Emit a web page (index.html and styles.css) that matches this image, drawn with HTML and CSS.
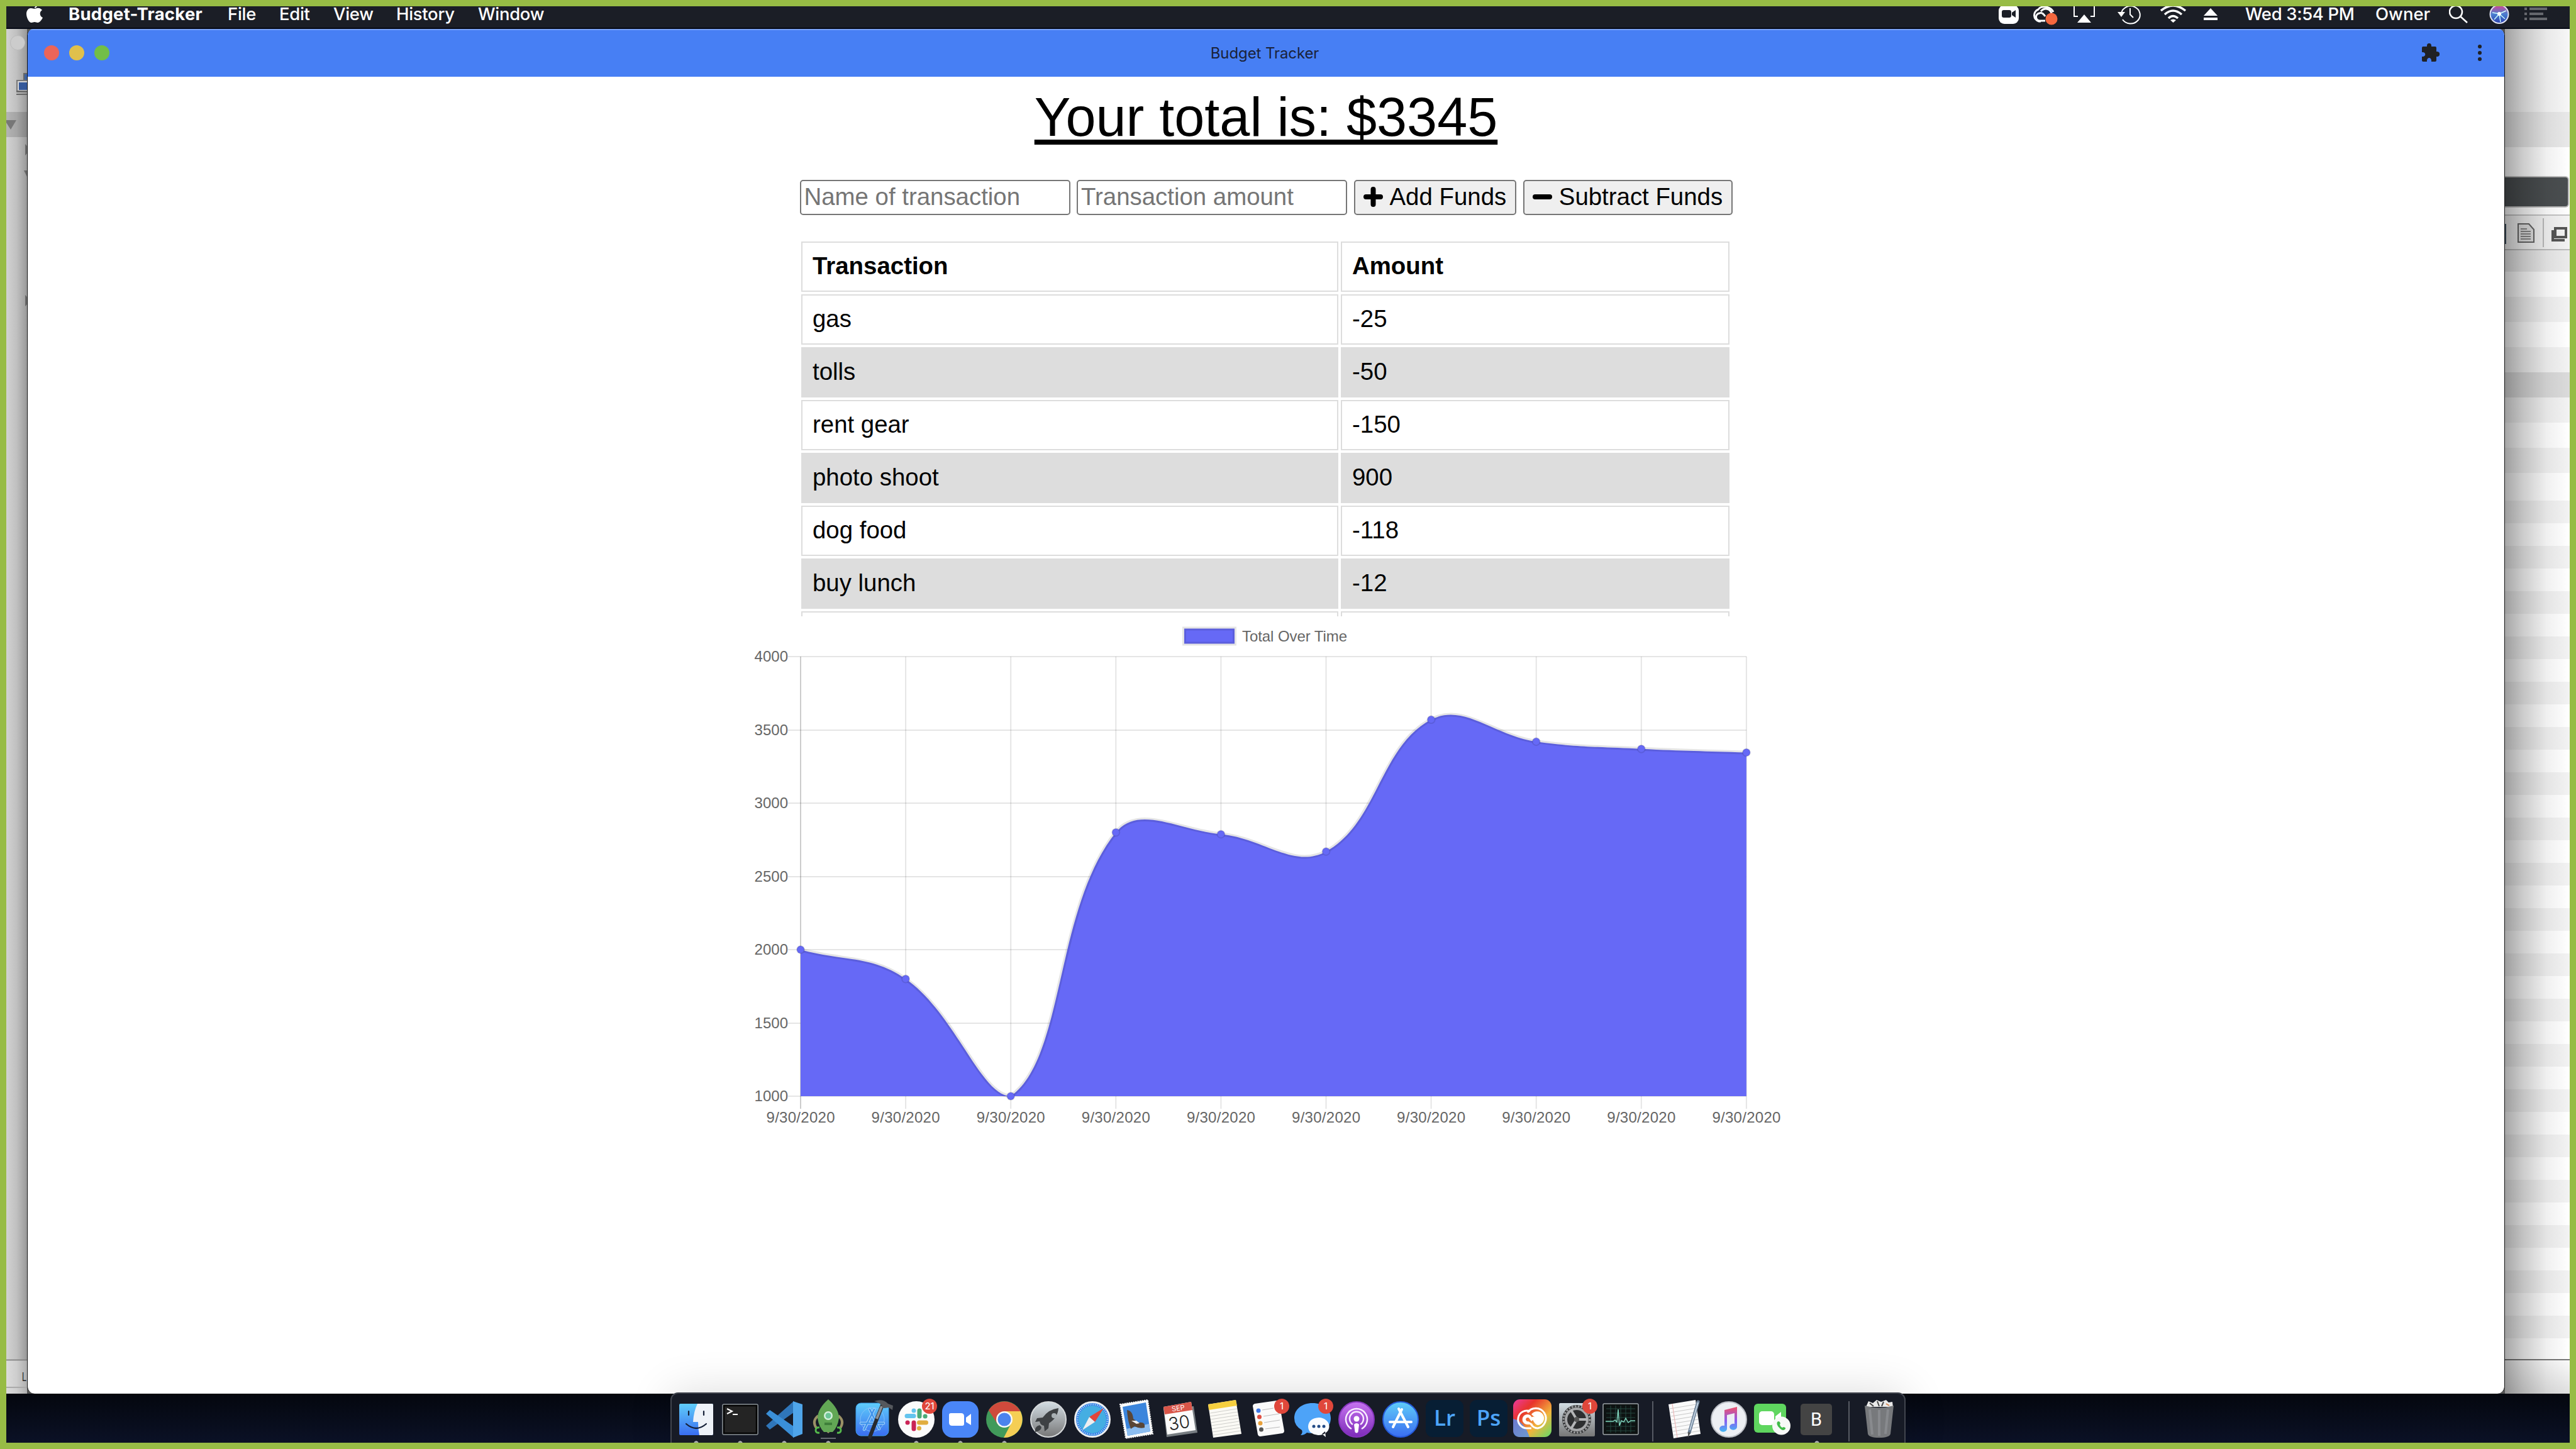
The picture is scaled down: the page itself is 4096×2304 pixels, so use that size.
FILE: index.html
```html
<!DOCTYPE html>
<html lang="en">
<head>
<meta charset="utf-8">
<title>Budget Tracker</title>
<link rel="stylesheet" href="styles.css">
</head>
<body>
<div class="screen">
  <header class="menubar">
    <nav class="menus">
      <svg class="apple" width="26" height="28" viewBox="0 0 26 28"><path fill="#fff" d="M13 2C14 0 16-1 17-1 17 1 15 3 13 3M13 4C15 4 16 2 20 3 22 3 24 5 25 6 20 9 21 16 26 18 24 22 21 26 18 26 16 26 15 25 13 25 11 25 10 26 8 26 4 26 0 18 0 12 0 7 3 3 7 3 10 3 11 4 13 4Z"/></svg>
      <span class="app-name">Budget-Tracker</span>
      <span>File</span><span>Edit</span><span>View</span><span>History</span><span>Window</span>
    </nav>
    <div class="status">
      <svg width="32" height="36"><rect x="0" y="-2" width="32" height="30" rx="9" fill="#fff"/><rect x="5" y="6" width="15" height="12" rx="3" fill="#1b1e26"/><path d="M21 10l6-4v12l-6-4z" fill="#1b1e26"/></svg>
      <svg width="44" height="36" fill="none" stroke="#fff" stroke-width="3"><path d="M15 24H12A10 10 0 0 1 11 5C15-1 30-1 35 9"/><path d="M22 23H14A6 6 0 0 1 13 11C17 9 20 13 22 16M15 8C22 0 32 5 32 13"/><circle cx="32" cy="20" r="9.5" fill="#f4673e" stroke="none"/></svg>
      <svg width="38" height="36" fill="none" stroke="#fff" stroke-width="2"><path d="M8 16H2V0M28 16h6V0"/><path d="M18 13l11 13H7z" fill="#fff" stroke="none"/></svg>
      <svg width="38" height="36" fill="none" stroke="#fff" stroke-width="2"><path d="M6 11A15 14 0 1 1 8 21M20 3v10l5 5"/><path d="M0 9h12l-6 8z" fill="#fff" stroke="none"/></svg>
      <svg width="42" height="36" fill="none" stroke="#fff" stroke-width="3.5"><path d="M1 7Q20-9 40 7M7 13Q20 1 34 13M13 19Q20 12 28 19"/><path d="M16 22q4.500-3 9 0l-4.500 4z" fill="#fff" stroke="none"/></svg>
      <svg width="24" height="36" fill="#fff"><path d="M11 3l11 12H0zM0 18h22v4H0z"/></svg>
      <span class="clock">Wed 3:54 PM</span>
      <span class="owner">Owner</span>
      <svg width="32" height="36" fill="none" stroke="#fff" stroke-width="2.500"><circle cx="11" cy="9" r="10"/><path d="M18 16l11 10"/></svg>
      <svg width="34" height="36"><defs><linearGradient id="siri" x2="0" y2="1"><stop offset="0" stop-color="#d6448f"/><stop offset=".5" stop-color="#4a7fd0"/><stop offset="1" stop-color="#2b3fae"/></linearGradient></defs><circle cx="16" cy="12.500" r="14.500" fill="url(#siri)" stroke="#dfe3f2" stroke-width="2"/><path d="M16 12L5 10M16 12l11-5M16 12l9 8M16 12l2 13M16 12L8 21" stroke="#c9fbff" stroke-width="1.500"/><circle cx="16" cy="12" r="3" fill="#fff"/></svg>
      <svg width="36" height="36" fill="#65676d"><path d="M0 2h4v4H0zM8 2h28v4H8zM0 10h4v4H0zM8 10h22v4H8zM0 18h4v4H0zM8 18h28v4H8z"/></svg>
    </div>
  </header>

  <div class="stage">
    <aside class="behind-left">
      <svg width="33" height="2170">
        <circle cx="18" cy="22" r="11.500" fill="#ccc" stroke="#bbb"/>
        <path d="M28 71h6v20h-6z" fill="#3d62a0" stroke="#666" stroke-width="2"/>
        <path d="M17 82h18v18H17z" fill="#d5d5d5" stroke="#777" stroke-width="2"/><path d="M20 85h14v12H20z" fill="#36599a"/><path d="M16 99h18M16 104h18" stroke="#666" stroke-width="2"/>
        <path d="M0 132h33v40H0z" fill="#000" opacity=".14"/>
        <path d="M0 145h16L7 160 0 149z" fill="#777"/>
        <path d="M30 183l9 9-9 9zM28 225h12l-6 12zM30 423l9 9-9 9z" fill="#686868"/>
        <path d="M0 2117h33v53H0z" fill="#fff" opacity=".22"/><path d="M0 2116.500h33" stroke="#777" stroke-width="1.500"/><path d="M0 2160h33" stroke="#aaa" stroke-width="2"/>
        <text class="peek" x="25" y="2150" textLength="7" lengthAdjust="spacingAndGlyphs">L</text>
      </svg>
    </aside>

    <main class="window">
      <div class="titlebar">
        <div class="lights"><i class="light red"></i><i class="light yellow"></i><i class="light green"></i></div>
        <div class="title">Budget Tracker</div>
        <div class="tools">
          <svg width="28" height="30" fill="#202124"><path d="M0 7Q0 5 2 5H8C7-2 16-2 15 5H21Q23 5 23 7V13C30 12 30 22 23 21V27Q23 29 21 29H15C16 21 7 21 8 29H2Q0 29 0 27V21C7 22 7 13 0 14Z"/></svg>
          <svg width="6" height="28" fill="#202124"><circle cx="3" cy="4" r="3"/><circle cx="3" cy="14" r="3"/><circle cx="3" cy="24" r="3"/></svg>
        </div>
      </div>
      <div class="page">
        <h1 class="total">Your total is: $3345</h1>
        <form class="entry">
          <input class="field" type="text" placeholder="Name of transaction">
          <input class="field" type="text" placeholder="Transaction amount">
          <button class="btn add" type="button"><svg width="31" height="32" viewBox="0 0 31 32"><path d="M15.500 4v24M4 16h23" stroke="#000" stroke-width="8" stroke-linecap="round"/></svg>Add Funds</button>
          <button class="btn sub" type="button"><svg width="31" height="32" viewBox="0 0 31 32"><path d="M4 16h23" stroke="#000" stroke-width="8" stroke-linecap="round"/></svg>Subtract Funds</button>
        </form>
        <div class="table-wrap">
          <table class="ledger">
            <thead><tr><th class="name">Transaction</th><th>Amount</th></tr></thead>
            <tbody>
              <tr><td>gas</td><td>-25</td></tr>
              <tr><td>tolls</td><td>-50</td></tr>
              <tr><td>rent gear</td><td>-150</td></tr>
              <tr><td>photo shoot</td><td>900</td></tr>
              <tr><td>dog food</td><td>-118</td></tr>
              <tr><td>buy lunch</td><td>-12</td></tr>
              <tr><td>&nbsp;</td><td>&nbsp;</td></tr>
            </tbody>
          </table>
        </div>
        <svg id="chart" class="chart" width="1680" height="830" viewBox="1173 980 1680 830"></svg>
      </div>
    </main>

    <aside class="behind-right">
      <div class="pane pane-top"></div>
      <div class="pane pane-tab"></div>
      <div class="pane pane-search"><div class="dark-field"></div></div>
      <div class="pane pane-icons">
        <svg width="103" height="52"><path d="M1 13v32" stroke="#456" stroke-width="2"/><path d="M21 13h17l8 9v20H21z" fill="#e4e4e4" stroke="#666" stroke-width="2"/><path d="M25 21h10M25 25h16M25 29h16M25 33h16M25 37h16" stroke="#888" stroke-width="2"/><path d="M61 4v46" stroke="#bbb" stroke-width="2"/><path d="M80 20h17v14H80zM76 23v16h19" fill="none" stroke="#555" stroke-width="4"/></svg>
      </div>
      <div class="pane pane-head"></div>
      <div class="pane pane-rows"></div>
      <div class="pane pane-rows-small"></div>
      <div class="pane pane-foot"></div>
    </aside>
  </div>

  <footer class="desk">
    <div class="dock">
      <svg class="ico run" viewBox="0 0 70 76"><defs><linearGradient id="b1" x2="0" y2="1"><stop offset="0" stop-color="#5fcdfa"/><stop offset="1" stop-color="#3a6df0"/></linearGradient><linearGradient id="gy" x2="0" y2="1"><stop offset="0" stop-color="#d3dde4"/><stop offset="1" stop-color="#777"/></linearGradient><linearGradient id="pu" x2="0" y2="1"><stop offset="0" stop-color="#c673f0"/><stop offset="1" stop-color="#7c2bb8"/></linearGradient><linearGradient id="cc" x2="1" y2="1"><stop offset="0" stop-color="#ec3aa0"/><stop offset=".3" stop-color="#e8342c"/><stop offset=".65" stop-color="#f2b53d"/><stop offset="1" stop-color="#5fdc6a"/></linearGradient><linearGradient id="mu" x2="0" y2="1"><stop offset="0" stop-color="#f0516b"/><stop offset=".55" stop-color="#8a5cf0"/><stop offset="1" stop-color="#42b8f5"/></linearGradient></defs><rect x="8" y="14" width="54" height="50" rx="2" fill="url(#b1)"/><path d="M37 14H60Q62 14 62 16V62Q62 64 60 64H40Q38 54 38 43H30Q31 26 37 14Z" fill="#eef2f8"/><path d="M23 26v6M47 26v6M19 46Q35 60 51 46" fill="none" stroke="#152038" stroke-width="2.200" stroke-linecap="round"/></svg>
      <svg class="ico run" viewBox="0 0 70 76"><rect x="7" y="15" width="56" height="48" rx="2" fill="#242424" stroke="#9aa3a8" stroke-width="1.500"/><rect x="9" y="17" width="52" height="44" fill="none" stroke="#050505" stroke-width="2.500"/><path d="M14 22l8 4-8 4M23 31h8" fill="none" stroke="#fff" stroke-width="2"/></svg>
      <svg class="ico run" viewBox="0 0 70 76"><path d="M6 49L50 10V28L12 55Z" fill="#2f76ba"/><path d="M12 24L50 50V68L6 30Z" fill="#3a8fd8"/><path d="M49 10L64 15V62L49 68Z" fill="#4fa5ea"/></svg>
      <svg class="ico run" viewBox="0 0 70 76"><path d="M19 33Q8 42 17 54M51 33Q62 42 53 54" fill="none" stroke="#9a9166" stroke-width="4"/><path d="M29 56h12l-6 5z" fill="#9a9166"/><path d="M35 7Q52 22 52 37 50 51 42 59H28Q20 51 18 37 18 22 35 7Z" fill="#62a755"/><circle cx="35" cy="33" r="7" fill="#d5f0dc"/><circle cx="35" cy="33" r="4.500" fill="#6cc597"/><path d="M29 44h12v4H29z" fill="#3f7f3a"/><path d="M21 52q-6-1-6 4t6 4M49 52q6-1 6 4t-6 4" fill="none" stroke="#55b94c" stroke-width="3"/><path d="M23 69h24" stroke="#666a72" stroke-width="2"/></svg>
      <svg class="ico" viewBox="0 0 70 76"><rect x="9" y="13" width="52" height="52" rx="8" fill="url(#b1)" stroke="#3b9ce8"/><circle cx="35" cy="39" r="19" fill="none" stroke="#8bc7f7" stroke-width=".8"/><path d="M22 55L38 23M46 54L31 23M17 45H53" stroke="#a9d6fa" stroke-width="4.500" stroke-linecap="round"/><path d="M22 55L38 23M46 54L31 23M17 45H53" stroke="#3f93ec" stroke-width="2.500" stroke-linecap="round"/><path d="M51 16L31 67" stroke="#27292d" stroke-width="6" stroke-linecap="round"/><path d="M50 18L42 38" stroke="#8d9196" stroke-width="4"/><path d="M38 10Q52 5 60 14L68 17 67 24 61 20Q56 21 53 21 48 12 38 10Z" fill="#55585d"/></svg>
      <svg class="ico run" viewBox="0 0 70 76"><circle cx="35" cy="39" r="29" fill="#fbfbfb"/><g stroke-width="7" stroke-linecap="round" fill="none"><path d="M31 25v.1M20 33.500h11" stroke="#63c4ee"/><path d="M40 25v9M49 34h.1" stroke="#4bab78"/><path d="M39.500 44h11M39.500 53v.1" stroke="#e1ad3f"/><path d="M31 44v10M21 44h.1" stroke="#ca2456"/></g><circle cx="56" cy="18" r="12" fill="#e0473b"/><text class="badge" x="56" y="23">21</text></svg>
      <svg class="ico run" viewBox="0 0 70 76"><rect x="6" y="10" width="58" height="58" rx="17" fill="#4a86f7"/><path d="M17 32Q17 29 20 29H36Q41 29 41 34V46Q41 49 38 49H22Q17 49 17 44ZM44 36L52 30V48L44 43Z" fill="#fff"/></svg>
      <svg class="ico run" viewBox="0 0 70 76"><circle cx="35" cy="39" r="29" fill="#419a5a"/><path d="M10 24.500A29 29 0 0 1 60.500 26H35L24 46Z" fill="#cf4a3c"/><path d="M60.500 26A29 29 0 0 1 34 68L46 45 35 26Z" fill="#f5ce55"/><circle cx="35" cy="39" r="13" fill="#f8f8f8"/><circle cx="35" cy="39" r="10.500" fill="#4b83ee"/></svg>
      <svg class="ico" viewBox="0 0 70 76"><circle cx="35" cy="39" r="28" fill="url(#gy)" stroke="#d6d9db" stroke-width="2"/><path d="M51 21Q35 23 26 36L17 37 14 43 21 42Q22 48 28 49L29 58 35 53 36 45Q50 36 51 21Z" fill="#3e4144"/><circle cx="44" cy="33" r="4" fill="#a9b0b4"/><path d="M21 48Q12 51 14 59 24 57 24 51Z" fill="#3e4144"/></svg>
      <svg class="ico" viewBox="0 0 70 76"><circle cx="35" cy="39" r="27.500" fill="#2e7fe6" stroke="#eceef0" stroke-width="3"/><circle cx="35" cy="39" r="22" fill="#45aee2"/><circle cx="35" cy="39" r="24" fill="none" stroke="#cfe6fb" stroke-width="3" stroke-dasharray="1 2"/><path d="M53 21L30 35 39 43Z" fill="#e2453b"/><path d="M19 56L30 35 39 43Z" fill="#eceef0"/></svg>
      <svg class="ico" viewBox="0 0 70 76"><path d="M9 15L53 8 61 62 18 69Z" fill="#fafafa" stroke="#fafafa" stroke-width="2" stroke-dasharray="2 1.500"/><path d="M13 19L50 12 57 58 21 65Z" fill="#3b85dc"/><path d="M19 54L55 46 57 58 21 65Z" fill="#8cbdf0"/><path d="M20 24Q29 25 30 38L38 44Q50 42 48 52 40 54 32 50L26 54 24 48Q21 39 20 24Z" fill="#5a4636"/><path d="M27 41l8 5 5-1-5-4z" fill="#eee"/></svg>
      <svg class="ico" viewBox="0 0 70 76"><path d="M8 21L13 67 62 60 56 18Z" fill="#777d82"/><path d="M8 19L52 11 59 56 14 63Z" fill="#fbfbfb"/><path d="M8 19L52 11 54 24 10 31Z" fill="#d95549"/><text class="cal-month" transform="rotate(-9 32 25)" x="32" y="25">SEP</text><text class="cal-day" transform="rotate(-9 34 52)" x="34" y="54">30</text></svg>
      <svg class="ico" viewBox="0 0 70 76"><path d="M9 15L53 8 62 62 17 68Z" fill="#fbfaf5"/><path d="M9 15L53 8 55 17 10 24Z" fill="#f6cf3f"/><path d="M12 29l43-7M12 34l44-7M13 39l44-7M14 44l44-7M14 49l44-7M15 54l44-7M16 59l44-7M17 64l44-7" stroke="#cfcfcb"/></svg>
      <svg class="ico" viewBox="0 0 70 76"><path d="M13 14L48 9Q51 9 52 12L60 57Q60 60 57 61L22 66Q19 66 18 63L10 18Q10 15 13 14Z" fill="#fafafa"/><circle cx="19" cy="25" r="3.500" fill="#3f78e6"/><circle cx="20.500" cy="35" r="3.500" fill="#e04f42"/><circle cx="22" cy="45" r="3.500" fill="#e9a13b"/><circle cx="23.500" cy="55" r="3.500" fill="#555"/><path d="M25 24l18-3M27 34l25-4M28 44l25-4M30 54l23-3" stroke="#bbb"/><circle cx="56" cy="18" r="12" fill="#e0473b"/><text class="badge" x="56" y="23">1</text></svg>
      <svg class="ico" viewBox="0 0 70 76"><path d="M35 13C52 13 64 23 64 37S52 61 35 61Q30 61 26 60 22 64 16 64 20 60 18 56 6 49 6 37C6 23 18 13 35 13Z" fill="#4da3f8"/><path d="M45 36A17 14 0 1 1 44 64Q28 62 28 50 29 37 45 36M50 62l6 5-1-9z" fill="#fafcff"/><circle cx="37" cy="50" r="2.500" fill="#234b86"/><circle cx="45" cy="50" r="2.500" fill="#234b86"/><circle cx="53" cy="50" r="2.500" fill="#234b86"/><circle cx="56" cy="18" r="12" fill="#e0473b"/><text class="badge" x="56" y="23">1</text></svg>
      <svg class="ico" viewBox="0 0 70 76"><circle cx="35" cy="39" r="28" fill="url(#pu)" stroke="#8534bd" stroke-width="2"/><g fill="none" stroke="#f8ecff" stroke-width="2.500"><path d="M27 54A17 17 0 1 1 43 54"/><path d="M29 47A11 11 0 1 1 41 47"/></g><circle cx="35" cy="38" r="4.500" fill="#fff"/><path d="M31 47q4-4 8 0l-1.500 12q-2.500 3-5 0z" fill="#fff"/></svg>
      <svg class="ico" viewBox="0 0 70 76"><circle cx="35" cy="39" r="28" fill="url(#b1)" stroke="#2559d8" stroke-width="2"/><path d="M23 51L37 23M47 51L32 22M18 43H52" stroke="#fff" stroke-width="4" stroke-linecap="round"/></svg>
      <svg class="ico" viewBox="0 0 70 76"><rect x="5" y="8" width="60" height="59" rx="11" fill="#071e34"/><text class="adobe" x="35" y="49">Lr</text></svg>
      <svg class="ico" viewBox="0 0 70 76"><rect x="5" y="8" width="60" height="59" rx="11" fill="#071e34"/><text class="adobe" x="35" y="49">Ps</text></svg>
      <svg class="ico" viewBox="0 0 70 76"><rect x="4" y="7" width="61" height="60" rx="11" fill="url(#cc)"/><path d="M4 38Q22 42 30 67H15Q4 67 4 56Z" fill="#4c8df6" opacity=".8"/><g fill="none" stroke="#fff" stroke-width="3"><path d="M33 53H26A14 14 0 1 1 31 26"/><path d="M27 28A16 16 0 1 1 43 53Q36 53 31 45"/></g><path d="M36 47H27A8 8 0 1 1 32 33L36 39 33 42 30 38A3 3 0 1 0 28 42ZM33 31A11 11 0 1 1 44 48Q40 48 37 43L33 36Q36 33 39 36Z" fill="#fff"/></svg>
      <svg class="ico" viewBox="0 0 70 76"><rect x="7" y="13" width="57" height="53" rx="2" fill="url(#gy)"/><circle cx="35" cy="39" r="23" fill="#2d2e30"/><circle cx="35" cy="39" r="21" fill="none" stroke="#9a9b9d" stroke-width="3" stroke-dasharray="3 2"/><circle cx="35" cy="39" r="17" fill="none" stroke="#a5a6a8" stroke-width="4"/><path d="M35 39L26 24M35 39H52M35 39L26 54" stroke="#b4b5b7" stroke-width="4"/><circle cx="35" cy="39" r="4" fill="#555"/><circle cx="56" cy="18" r="12" fill="#e0473b"/><text class="badge" x="56" y="23">1</text></svg>
      <svg class="ico" viewBox="0 0 70 76"><rect x="7" y="14" width="56" height="49" rx="2" fill="#0d1212" stroke="#9ca3a6" stroke-width="1.500"/><path d="M12 22h46M12 29h46M12 36h46M12 43h46M12 50h46M12 57h46M19 17v43M27 17v43M35 17v43M43 17v43M51 17v43" stroke="#24463f"/><path d="M11 42h12l3-2 3 3 2-20 2 26 3-8 4 2 3-6 4 7 4-3h7" fill="none" stroke="#7fd3bb" stroke-width="1.500"/></svg>
      <span class="sep"></span>
      <svg class="ico" viewBox="0 0 70 76"><path d="M9 15L52 8 60 62 17 69Z" fill="#fafafa"/><path d="M11 22l42-7M12 28l42-7M13 34l42-7M14 40l42-7M14 46l42-7M15 52l42-7M16 58l42-7M17 64l42-7" stroke="#c8c8c8"/><path d="M15 14l8 54" stroke="#eeb0b0"/><path d="M56 11L42 60" stroke="#6a7f96" stroke-width="5" stroke-linecap="round"/><path d="M56 12L43 56" stroke="#c3d2e0" stroke-width="2"/><path d="M40 59l4 1-4 8z" fill="#555"/></svg>
      <svg class="ico" viewBox="0 0 70 76"><circle cx="35" cy="39" r="28" fill="#edeff4" stroke="#b9bcc3" stroke-width="2"/><path d="M28 24L48 19V50A6 5 0 1 1 44 46V29L32 32V53A6 5 0 1 1 28 49Z" fill="url(#mu)"/></svg>
      <svg class="ico" viewBox="0 0 70 76"><rect x="5" y="14" width="51" height="46" rx="6" fill="#5fd65f"/><rect x="13" y="26" width="24" height="22" rx="5" fill="#fff"/><path d="M39 34L48 27V46L39 42Z" fill="#fff"/><circle cx="48.500" cy="49" r="14.500" fill="#f7f9f7"/><path d="M42 43q3-3 5 2l-1 2q1 4 4 5l2-1q5 1 2 4-4 3-9-3-5-5-3-9" fill="#41bb49"/></svg>
      <svg class="ico run" viewBox="0 0 70 76"><rect x="9" y="14" width="50" height="50" rx="5" fill="#444"/><text class="letter" x="34" y="49">B</text></svg>
      <span class="sep sep-trash"></span>
      <svg class="ico" viewBox="0 0 70 76"><path d="M14 19L18 10 25 13 31 8 38 11 46 8 50 12 56 11 57 19Z" fill="#e9e9e9"/><path d="M20 13l6 5M32 10l3 8M42 11l-3 7" stroke="#444" stroke-width="2"/><path d="M46 14l5 3" stroke="#d98a54" stroke-width="2"/><path d="M12 17Q35 24 58 17L53 62Q51 68 35 68T17 62Z" fill="#77797c"/><path d="M20 23l4 40M35 24v41M49 23l-4 39" stroke="#999ca0" stroke-width="4" opacity=".5"/></svg>
    </div>
  </footer>
</div>
<script src="chart.js"></script>
</body>
</html>
```
FILE: styles.css
```css
* { box-sizing: border-box; }
body { margin: 0; font-family: "Liberation Sans", Arial, sans-serif; color: #000; }
.screen {
  width: 4096px; height: 2304px; border: 10px solid #97bc45; overflow: hidden;
  display: flex; flex-direction: column; background: #0a0f1f;
}

/* menu bar */
.menubar {
  height: 36px; flex: none; display: flex; justify-content: space-between;
  background: #1b1e26; border-bottom: 2px solid #050914;
  color: #fff; font-family: Inter, sans-serif; font-size: 27.5px; line-height: 24px;
  font-weight: 500; white-space: nowrap;
}
.menus { display: grid; grid-template-columns: 67px 253px 82px 86px 100px 130px 110px; padding-left: 32px; letter-spacing: -.3px; }
.menus .app-name { font-weight: 700; letter-spacing: .25px; }
.status { display: grid; grid-template-columns: 52px 66px 71px 68px 69px 66px 207px 117px 64px 56px 72px; }
.status .clock { letter-spacing: -.35px; }

/* desktop area */
.stage { height: 2170px; flex: none; display: grid; grid-template-columns: 33px 3940px 103px; background: #555; }
.behind-left { background: linear-gradient(to right, #d2d2d2, #c0c0c0 50%, #999); }
.behind-left svg { display: block; }
.peek { font: 20px "Liberation Sans", sans-serif; fill: #222; }

.behind-right {
  display: flex; flex-direction: column; position: relative; background: #fff;
}
.behind-right::after {
  content: ""; position: absolute; inset: 0;
  background: linear-gradient(to right, rgba(0,0,0,.35), rgba(0,0,0,.2) 28%, rgba(0,0,0,.06) 65%, rgba(0,0,0,0));
}
.pane { flex: none; }
.pane-top { height: 132px; background: #f7f7f7; }
.pane-tab { height: 56px; background: #e9e9e9; }
.pane-search { height: 109px; padding: 46px 1px 13px 0; border-bottom: 2px solid #c4c4c4; }
.dark-field { height: 50px; background: #4a4e50; border: 2px solid #b9b9b9; border-left: 0; border-radius: 0 6px 6px 0; }
.pane-icons { height: 55px; background: #f3f3f3; border-bottom: 2px solid #bdbdbd; }
.pane-icons svg { display: block; }
.pane-head { height: 34px; background: #ebebeb; }
.pane-rows {
  height: 328px;
  background:
    linear-gradient(#dbdbdb, #dbdbdb) 0 160px / 100% 40px no-repeat,
    linear-gradient(#f3f3f3, #f3f3f3) 0 200px / 100% 40px no-repeat,
    repeating-linear-gradient(#fff 0 40px, #f3f3f3 40px 80px);
}
.pane-rows-small { flex: 1; background: repeating-linear-gradient(#fff 0 36px, #f3f3f3 36px 72px); }
.pane-foot { height: 55px; border-top: 2px solid #777; background: linear-gradient(#fafafa, #e0e0e0); }

/* app window */
.window {
  background: #fff; border: solid #111; border-width: 0 1px; border-radius: 10px 10px 12px 12px;
  overflow: hidden; display: flex; flex-direction: column; min-width: 0;
}
.titlebar {
  height: 76px; flex: none; background: #477ff4; border-top: 2px solid #7aa3f8;
  display: grid; grid-template-columns: 1fr auto 1fr; align-items: center; padding: 0 36px 2px 26px;
}
.lights { display: flex; gap: 16px; }
.light { width: 24px; height: 24px; border-radius: 50%; }
.red { background: #eb6559; }
.yellow { background: #e0c04c; }
.green { background: #72be47; }
.title { font-family: Inter, sans-serif; font-size: 24px; color: #1a2238; letter-spacing: -.1px; padding-left: 6px; }
.tools { display: flex; justify-content: flex-end; align-items: center; gap: 61px; }
.page { flex: 1; display: flex; flex-direction: column; align-items: center; }
.total {
  margin: 14px 0 50px; font-size: 86.4px; line-height: 100px; font-weight: 400; white-space: nowrap;
  text-decoration: underline; text-decoration-thickness: 8px; text-underline-offset: 6px;
}
.entry { display: flex; gap: 10.500px; height: 56px; width: 1483px; }
.field, .btn {
  font: 38.4px "Liberation Sans", Arial, sans-serif; border: 2px solid #767676; border-radius: 5px;
  height: 56px; padding: 0 5px 3px; margin: 0; color: #000;
}
.field { width: 430px; background: #fff; }
.field::placeholder { color: #757575; opacity: 1; }
.btn { background: #efefef; display: flex; align-items: center; gap: 11px; padding-left: 13px; white-space: nowrap; }
.btn svg { flex: none; }
.add { width: 259px; }
.sub { width: 333px; }
.table-wrap { width: 1484px; height: 600px; margin: 38px 2px 0 0; overflow: hidden; }
.ledger { width: 1484px; table-layout: fixed; border-collapse: separate; border-spacing: 4px; font-size: 38.4px; line-height: 44px; }
.ledger th, .ledger td { border: 2px solid #ddd; padding: 15px 16px 17px; text-align: left; }
.ledger .name { width: 854px; }
.ledger tbody tr:nth-child(even) { background: #ddd; }
.chart { display: block; flex: none; }
.chart text { font: 24px "Liberation Sans", Arial, sans-serif; fill: #666; }

/* dock */
.desk {
  flex: 1; display: flex; justify-content: center; min-height: 0;
  background: linear-gradient(#04070e, #0b1126);
}
.dock {
  margin-top: -2px; height: 90px; width: 1964px; flex: none; display: flex; align-items: flex-start;
  padding: 2px 4px; background: #171b26; border: 2px solid #41454e; border-radius: 12px 12px 0 0;
  box-shadow: 0 0 70px rgba(0,0,0,.14); position: relative;
}
.ico { width: 70px; height: 76px; flex: none; }
.run { background: radial-gradient(circle at 35px 77px, #a5a7ad 3.500px, transparent 4px); }
.sep { width: 2px; height: 64px; margin: 10px 15px 0; background: #565a63; flex: none; }
.sep-trash { margin-right: 12px; }
.badge { font: 15px Inter, sans-serif; fill: #fff; text-anchor: middle; }
.cal-month { font: 11px Inter, sans-serif; fill: #fff; text-anchor: middle; }
.cal-day { font: 28px Inter, sans-serif; font-weight: 300; fill: #222; text-anchor: middle; }
.adobe { font: 600 35px "Open Sans", sans-serif; fill: #4da5fb; text-anchor: middle; }
.letter { font: 29px Roboto, sans-serif; fill: #fff; text-anchor: middle; }
```
FILE: chart.js
```javascript
// Area chart of the running total, with smoothed segments.
const totals = [2000, 1800, 1000, 2800, 2788, 2670, 3570, 3420, 3370, 3345];
const label = '9/30/2020';
const left = 1273, step = 167.1, top0 = 1044, bottom = 1743, min = 1000, max = 4000;
const right = left + step * 9;
const yOf = v => bottom - (v - min) / (max - min) * (bottom - top0);
const pts = totals.map((v, i) => ({ x: left + step * i, y: yOf(v) }));
const clamp = (v, lo, hi) => Math.max(lo, Math.min(hi, v));

pts.forEach((p, i) => {
  const a = pts[i - 1] || p, b = pts[i + 1] || p;
  const d1 = Math.hypot(p.x - a.x, p.y - a.y), d2 = Math.hypot(b.x - p.x, b.y - p.y);
  const fa = 0.4 * d1 / (d1 + d2), fb = 0.4 * d2 / (d1 + d2);
  p.px = clamp(p.x - fa * (b.x - a.x), left, right);
  p.py = clamp(p.y - fa * (b.y - a.y), top0, bottom);
  p.nx = clamp(p.x + fb * (b.x - a.x), left, right);
  p.ny = clamp(p.y + fb * (b.y - a.y), top0, bottom);
});

let curve = `M${pts[0].x} ${pts[0].y}`;
for (let i = 1; i < pts.length; i++) {
  const a = pts[i - 1], b = pts[i];
  curve += `C${a.nx} ${a.ny} ${b.px} ${b.py} ${b.x} ${b.y}`;
}

let out = '';
for (let v = min; v <= max; v += 500) {
  const y = Math.round(yOf(v));
  out += `<path d="M${left - 20} ${y}H${right}" stroke="rgba(0,0,0,.1)" stroke-width="2"/>`;
  out += `<text x="1253" y="${y + 8}" text-anchor="end">${v}</text>`;
}
pts.forEach((p, i) => {
  out += `<path d="M${p.x} ${top0}V${bottom + 20}" stroke="rgba(0,0,0,${i ? 0.1 : 0.2})" stroke-width="2"/>`;
  out += `<text x="${p.x}" y="1785" text-anchor="middle" textLength="109">${label}</text>`;
});
out += `<path d="${curve}L${right} ${bottom}H${left}Z" fill="#6669f6"/>`;
out += `<path d="${curve}" fill="none" stroke="rgba(0,0,0,.1)" stroke-width="6"/>`;
pts.forEach(p => {
  out += `<circle cx="${p.x}" cy="${p.y}" r="6" fill="#6669f6" stroke="rgba(0,0,0,.1)" stroke-width="2"/>`;
});
out += '<rect x="1883" y="999.5" width="80" height="24" fill="#6669f6" stroke="rgba(0,0,0,.1)" stroke-width="6"/>';
out += '<text x="1975" y="1020" textLength="167">Total Over Time</text>';
document.getElementById('chart').innerHTML = out;
```
